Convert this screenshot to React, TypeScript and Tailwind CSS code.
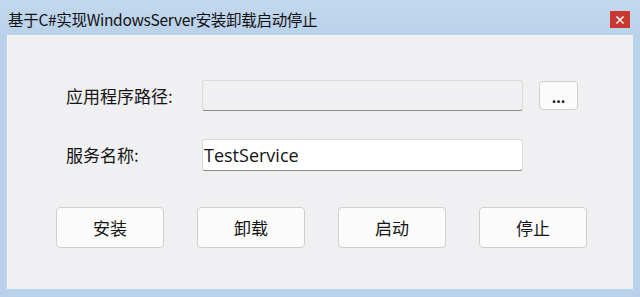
import React from "react";

const font = { fontFamily: '"Microsoft YaHei", "Noto Sans CJK SC", "Open Sans", sans-serif' };

function Btn({ children, className = "" }: { children: React.ReactNode; className?: string }) {
  return (
    <div
      className={
        "flex items-center justify-center rounded-[4px] border border-[#cfcfcf] bg-[#fbfbfb] text-[17px] text-[#141414] " +
        className
      }
    >
      {children}
    </div>
  );
}

export default function App() {
  return (
    <div
      className="w-[640px] h-[297px] bg-[#b9d1ea] flex flex-col overflow-hidden"
      style={font}
    >
      <div className="h-[35px] flex items-center pl-[8px] pr-[10px] pt-[4px] bg-gradient-to-b from-[#c3d8ee] to-[#b9d1ea]">
        <div className="text-[15.5px] tracking-[-0.3px] text-[#111] leading-none">基于C#实现WindowsServer安装卸载启动停止</div>
        <div className="ml-auto w-[20px] h-[17px] bg-[#c9382f] flex items-center justify-center text-white text-[12px] font-bold leading-none">
          ×
        </div>
      </div>
      <div className="ml-[7px] mr-[7px] h-[254px] bg-[#f0f0f2] border-l border-t border-[#f9f6ee] flex flex-col">
        <div className="flex items-center mt-[44px] h-[31px]">
          <div className="w-[194px] pl-[58px] text-[17px] text-[#141414]">应用程序路径:</div>
          <div className="w-[321px] h-[31px] bg-[#f0f0f2] border border-[#dadada] border-b-[#8a8a8a] rounded-[3px]" />
          <Btn className="ml-[16px] w-[39px] h-[29px] !text-[14px] font-bold pt-[4px]">...</Btn>
        </div>
        <div className="flex items-center mt-[28px] h-[32px]">
          <div className="w-[194px] pl-[58px] text-[17px] text-[#141414]">服务名称:</div>
          <div className="w-[321px] h-[32px] bg-white border border-[#dadada] border-b-[#8a8a8a] rounded-[3px] flex items-center pl-[1px] text-[18px] text-[#141414]" style={{ fontFamily: '"Open Sans", "Noto Sans", sans-serif' }}>
            TestService
          </div>
        </div>
        <div className="flex mt-[36px] pl-[48px] gap-[33px]">
          <Btn className="w-[108px] h-[41px]">安装</Btn>
          <Btn className="w-[108px] h-[41px]">卸载</Btn>
          <Btn className="w-[108px] h-[41px]">启动</Btn>
          <Btn className="w-[108px] h-[41px]">停止</Btn>
        </div>
      </div>
    </div>
  );
}
